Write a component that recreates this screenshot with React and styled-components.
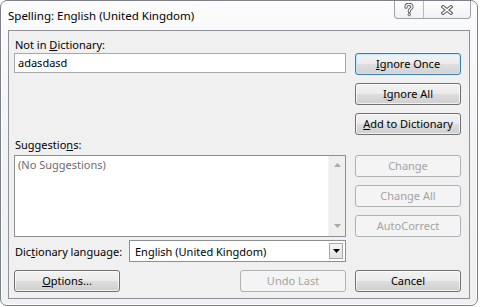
import React from "react";
import styled, { createGlobalStyle, css } from "styled-components";

const Global = createGlobalStyle`
  html, body { margin: 0; padding: 0; background: #ffffff; }
  body { font-family: "Noto Sans", "Open Sans", sans-serif; -webkit-font-smoothing: subpixel-antialiased; }
  * { box-sizing: border-box; }
`;

const Window = styled.div`
  width: 478px;
  height: 306px;
  border: 1px solid #7d8187;
  border-radius: 7px;
  background: linear-gradient(180deg, #fbfbfc 0%, #f3f4f6 45%, #eff0f2 100%);
  box-shadow: inset 0 0 0 1px rgba(255, 255, 255, 0.85);
  display: flex;
  flex-direction: column;
`;

const TitleBar = styled.div`
  height: 29px;
  display: flex;
  align-items: flex-start;
  padding: 0 6px 0 7px;
`;

const Title = styled.div`
  font-size: 11.5px;
  line-height: 16px;
  margin-top: 7px;
  color: #000;
`;

const Caption = styled.div`
  margin-left: auto;
  display: flex;
  height: 18px;
  border: 1px solid #9ea2a8;
  border-top: none;
  border-radius: 0 0 4px 4px;
  background: linear-gradient(180deg, #fdfdfd 0%, #f1f2f4 100%);
  overflow: hidden;
`;

const CaptionBtn = styled.div`
  width: ${(p) => p.$w}px;
  display: flex;
  align-items: center;
  justify-content: center;
  & + & {
    border-left: 1px solid #b8bbc0;
  }
`;

const Client = styled.div`
  flex: 1;
  margin: 0 7px 6px 7px;
  border: 1px solid #8f9298;
  background: #f0f0f0;
  display: flex;
  gap: 9px;
  padding: 0 8px 0 5px;
  font-size: 11px;
  color: #000;
`;

const LeftCol = styled.div`
  width: 332px;
  display: flex;
  flex-direction: column;
`;

const RightCol = styled.div`
  width: 106px;
  display: flex;
  flex-direction: column;
  padding-top: 22px;
`;

const Label = styled.div`
  height: 16px;
  line-height: 16px;
  padding-left: 1px;
  margin-top: ${(p) => p.$mt || 0}px;
  white-space: nowrap;
`;

const TextBox = styled.div`
  height: 20px;
  border: 1px solid #a5a9ae;
  background: #fff;
  line-height: 18px;
  padding-left: 3px;
`;

const ListBox = styled.div`
  margin-top: 2px;
  height: 82px;
  border: 1px solid #8c8f94;
  background: #fff;
  display: flex;
`;

const ListItems = styled.div`
  flex: 1;
  color: #6d6d6d;
  padding: 2px 0 0 3px;
  line-height: 14px;
`;

const ScrollBar = styled.div`
  width: 17px;
  background: #efefef;
  border-left: 1px solid #f4f4f4;
  display: flex;
  flex-direction: column;
  justify-content: space-between;
  align-items: center;
  padding: 7px 0 8px;
`;

const Arrow = ({ down, color = "#a9a9a9" }) => (
  <svg width="7" height="4" viewBox="0 0 7 4">
    <path d={down ? "M0 0 L7 0 L3.5 4 Z" : "M0 4 L7 4 L3.5 0 Z"} fill={color} />
  </svg>
);

const Row = styled.div`
  display: flex;
  align-items: center;
  justify-content: ${(p) => p.$justify || "flex-start"};
  margin-top: ${(p) => p.$mt || 0}px;
`;

const RowLabel = styled.div`
  width: 115px;
  padding-left: 1px;
  white-space: nowrap;
`;

const Select = styled.div`
  flex: 1;
  height: 22px;
  border: 1px solid #8c8f94;
  background: #fff;
  display: flex;
  align-items: center;
  padding: 0 2px 0 5px;
`;

const SelectText = styled.div`
  flex: 1;
`;

const DropBtn = styled.div`
  width: 14px;
  height: 16px;
  border: 1px solid #a7a7a7;
  background: linear-gradient(180deg, #f6f6f6, #e3e3e3);
  display: flex;
  align-items: center;
  justify-content: center;
`;

const Button = styled.div`
  width: 106px;
  height: 22px;
  border: 1px solid #707070;
  border-radius: 3px;
  background: linear-gradient(180deg, #f2f2f2 0%, #ebebeb 48%, #dddddd 52%, #cfcfcf 100%);
  box-shadow: inset 0 0 0 1px rgba(255, 255, 255, 0.7);
  display: flex;
  align-items: center;
  justify-content: center;
  line-height: 16px;
  color: #000;
  margin-top: ${(p) => p.$mt || 0}px;
  ${(p) =>
    p.$default &&
    css`
      border-color: #3c7fb1;
      box-shadow: inset 0 0 0 1px #bfe6fc;
      background: linear-gradient(180deg, #f3f3f3 0%, #ebebeb 48%, #dedede 52%, #d2d2d2 100%);
    `}
  ${(p) =>
    p.$disabled &&
    css`
      border-color: #adb2b5;
      background: #f4f4f4;
      box-shadow: none;
      color: #a3a3a3;
    `}
`;

const QuestionGlyph = () => (
  <svg width="10" height="14" viewBox="0 0 10 14">
    <g fill="none" strokeLinecap="round" strokeLinejoin="round">
      <path d="M2 4.2 C2 2.2 3.3 1.3 5 1.3 C6.8 1.3 8 2.3 8 3.9 C8 5.7 5.3 6 5.3 8 L5.3 8.6" stroke="#5b5e63" strokeWidth="3.2" />
      <circle cx="5.3" cy="11.6" r="1.2" fill="#fff" stroke="#5b5e63" strokeWidth="1" />
      <path d="M2 4.2 C2 2.2 3.3 1.3 5 1.3 C6.8 1.3 8 2.3 8 3.9 C8 5.7 5.3 6 5.3 8 L5.3 8.6" stroke="#ffffff" strokeWidth="1.3" />
    </g>
  </svg>
);

const CloseGlyph = () => (
  <svg width="12" height="10" viewBox="0 0 12 10">
    <g strokeLinecap="square">
      <path d="M2 1.8 L10 8.2 M10 1.8 L2 8.2" stroke="#5b5e63" strokeWidth="3.4" />
      <path d="M2 1.8 L10 8.2 M10 1.8 L2 8.2" stroke="#ffffff" strokeWidth="1.4" />
    </g>
  </svg>
);

export default function App() {
  return (
    <>
      <Global />
      <Window>
        <TitleBar>
          <Title>Spelling: English (United Kingdom)</Title>
          <Caption>
            <CaptionBtn $w={28}>
              <QuestionGlyph />
            </CaptionBtn>
            <CaptionBtn $w={47}>
              <CloseGlyph />
            </CaptionBtn>
          </Caption>
        </TitleBar>
        <Client>
          <LeftCol>
            <Label $mt={6}>
              Not in <u>D</u>ictionary:
            </Label>
            <TextBox>adasdasd</TextBox>
            <Label $mt={64}>
              Suggestio<u>n</u>s:
            </Label>
            <ListBox>
              <ListItems>(No Suggestions)</ListItems>
              <ScrollBar>
                <Arrow />
                <Arrow down />
              </ScrollBar>
            </ListBox>
            <Row $mt={3}>
              <RowLabel>
                Dic<u>t</u>ionary language:
              </RowLabel>
              <Select>
                <SelectText>English (United Kingdom)</SelectText>
                <DropBtn>
                  <Arrow down color="#000" />
                </DropBtn>
              </Select>
            </Row>
            <Row $mt={8} $justify="space-between">
              <Button>
                <u>O</u>ptions...
              </Button>
              <Button $disabled>Undo Last</Button>
            </Row>
          </LeftCol>
          <RightCol>
            <Button $default>
              <u>I</u>gnore Once
            </Button>
            <Button $mt={8}>
              I<u>g</u>nore All
            </Button>
            <Button $mt={8}>
              <u>A</u>dd to Dictionary
            </Button>
            <Button $mt={20} $disabled>
              Change
            </Button>
            <Button $mt={8} $disabled>
              Change All
            </Button>
            <Button $mt={8} $disabled>
              AutoCorrect
            </Button>
            <Button $mt={33}>Cancel</Button>
          </RightCol>
        </Client>
      </Window>
    </>
  );
}
